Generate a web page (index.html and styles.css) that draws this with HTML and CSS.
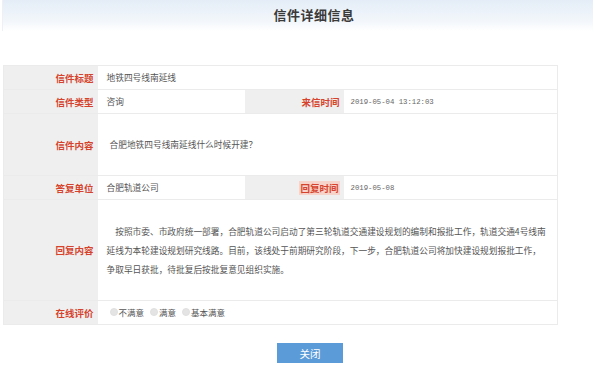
FILE: index.html
```html
<!DOCTYPE html>
<html lang="zh-CN">
<head>
  <meta charset="UTF-8">
  <title>信件详细信息</title>
  <link rel="stylesheet" href="styles.css">
</head>
<body>

<header class="page-head">
  <h1>信件详细信息</h1>
</header>

<!-- letter detail table -->
<table class="detail">
  <colgroup>
    <col class="c-label">
    <col class="c-value">
    <col class="c-label2">
    <col class="c-value2">
  </colgroup>
  <tr class="row-s">
    <th>信件标题</th>
    <td colspan="3">地铁四号线南延线</td>
  </tr>
  <tr class="row-s">
    <th>信件类型</th>
    <td>咨询</td>
    <th>来信时间</th>
    <td class="date">2019-05-04 13:12:03</td>
  </tr>
  <tr class="row-content">
    <th>信件内容</th>
    <td colspan="3" class="text">合肥地铁四号线南延线什么时候开建？</td>
  </tr>
  <tr class="row-s">
    <th>答复单位</th>
    <td>合肥轨道公司</td>
    <th><span class="mark">回复时间</span></th>
    <td class="date">2019-05-08</td>
  </tr>
  <tr class="row-reply">
    <th>回复内容</th>
    <td colspan="3" class="text">
      <p class="reply">按照市委、市政府统一部署，合肥轨道公司启动了第三轮轨道交通建设规划的编制和报批工作，轨道交通4号线南延线为本轮建设规划研究线路。目前，该线处于前期研究阶段，下一步，合肥轨道公司将加快建设规划报批工作，争取早日获批，待批复后按批复意见组织实施。</p>
    </td>
  </tr>
  <tr class="row-s">
    <th>在线评价</th>
    <td colspan="3" class="rating">
      <label><input type="radio" name="rate">不满意</label>
      <label><input type="radio" name="rate">满意</label>
      <label><input type="radio" name="rate">基本满意</label>
    </td>
  </tr>
</table>

<div class="actions">
  <button class="button">关闭</button>
</div>

</body>
</html>
```

FILE: styles.css
```css
/* Basic reset and typography */
body {
  margin: 0;
  background: #fff;
  font-family: "Noto Sans CJK SC", "Liberation Sans", sans-serif;
  color: #555;
}
.page-head {
  height: 31px;
  background: linear-gradient(to bottom, #e4edf7, #f3f7fb 70%, #fff);
  border-left: 1px solid #eef1f4;
  display: flex;
  align-items: center;
  justify-content: center;
  padding-left: 32px;
  margin-left: 2px;
}
.page-head h1 {
  margin: 0;
  font-size: 13px;
  font-weight: bold;
  color: #3a3a3a;
  letter-spacing: 0.5px;
  line-height: 1;
  margin-top: -3px;
}
.detail {
  margin: 34px 0 0 3px;
  border-collapse: collapse;
  table-layout: fixed;
  width: 554px;
  border: 1px solid #ebebeb;
}
.c-label { width: 94px; }
.c-value { width: 147px; }
.c-label2 { width: 99px; }
.c-value2 { width: 214px; }
.detail th,
.detail td {
  border-top: 1px solid #ebebeb;
  padding: 0;
  vertical-align: middle;
}
.detail th {
  background: #efefef;
  color: #d5432d;
  font-size: 9.5px;
  font-weight: bold;
  text-align: right;
  padding-right: 4px;
}
.detail td {
  background: #fff;
  font-size: 8.7px;
  color: #555;
  text-align: left;
  padding-left: 9px;
}
.row-s { height: 24px; }
.row-content { height: 62px; }
.row-reply { height: 101px; }
.detail td.date {
  font-family: "Liberation Mono", monospace;
  font-size: 7.3px;
  color: #666;
  padding-left: 7px;
}
.detail td.text {
  padding-left: 12px;
}
.detail td.text .reply {
  margin: 0;
  margin-left: -3px;
  margin-right: 8px;
  line-height: 19px;
  text-indent: 1em;
}
.mark {
  background: #f6d3cb;
  padding: 0 1px;
}
.rating label {
  margin-right: 4px;
  display: inline-flex;
  align-items: center;
  font-size: 8.5px;
}
.rating input {
  appearance: none;
  -webkit-appearance: none;
  width: 8px;
  height: 8px;
  margin: 0 1px 0 0;
  border-radius: 50%;
  background: #e4e4e4;
  border: 1px solid #e0e0e0;
}
.rating label:first-child input {
  margin-left: 3px;
}
.actions {
  display: flex;
  justify-content: center;
  padding-left: 27px;
  margin-top: 18px;
}
.button {
  width: 66px;
  height: 20px;
  border: none;
  border-radius: 0;
  background: #5b9bd8;
  color: #fff;
  font-family: "Noto Sans CJK SC", sans-serif;
  font-size: 10.5px;
  padding: 0;
  cursor: pointer;
}
```
